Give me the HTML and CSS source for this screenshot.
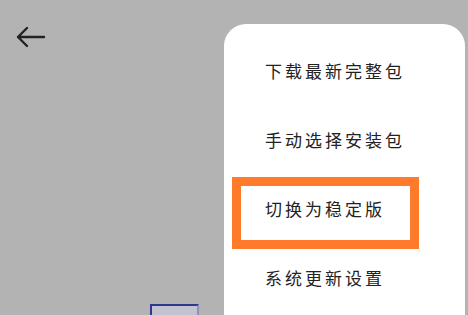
FILE: index.html
```html
<!DOCTYPE html>
<html lang="zh-CN">
<head>
  <meta charset="UTF-8">
  <meta name="viewport" content="width=device-width, initial-scale=1.0">
  <title>系统更新</title>
  <link rel="stylesheet" href="styles.css">
</head>
<body>
  <div class="page">
    <div class="header">
      <svg class="back" width="30" height="24" viewBox="0 0 30 24">
        <path d="M2 12H28M11 3L2 12L11 21" fill="none" stroke="#222" stroke-width="2.4" stroke-linecap="round" stroke-linejoin="round"/>
      </svg>
    </div>
    <div class="thumb"></div>
  </div>

  <div class="menu">
    <div class="item">下载最新完整包</div>
    <div class="item">手动选择安装包</div>
    <div class="item marked">切换为稳定版</div>
    <div class="item">系统更新设置</div>
  </div>
</body>
</html>
```

FILE: styles.css
```css
html, body {
  margin: 0;
  padding: 0;
}
body {
  width: 468px;
  height: 315px;
  overflow: hidden;
  position: relative;
  background: #b3b3b3;
  font-family: "Noto Sans CJK SC", "Noto Sans", sans-serif;
}
.page {
  height: 100%;
}
.header {
  padding: 25px 0 0 16px;
  height: 24px;
}
.back {
  display: block;
}
.thumb {
  margin: 255px 0 0 150px;
  width: 45px;
  height: 9px;
  border: 2px solid #2c3a8c;
  border-bottom: none;
  border-right-color: #8f93b8;
  background: #c3c3cf;
}
.menu {
  position: absolute;
  top: 24px;
  left: 224px;
  width: 241px;
  height: 291px;
  background: #fff;
  border-radius: 22px 22px 0 0;
  padding-top: 12px;
  box-sizing: border-box;
}
.item {
  position: relative;
  height: 69px;
  line-height: 69px;
  padding-left: 41px;
  font-size: 17px;
  letter-spacing: 3px;
  color: #222;
}
.item.marked::after {
  content: '';
  position: absolute;
  top: 3px;
  left: 8px;
  width: 187px;
  height: 72px;
  border: 9px solid #ff7a2b;
  box-sizing: border-box;
}
```
